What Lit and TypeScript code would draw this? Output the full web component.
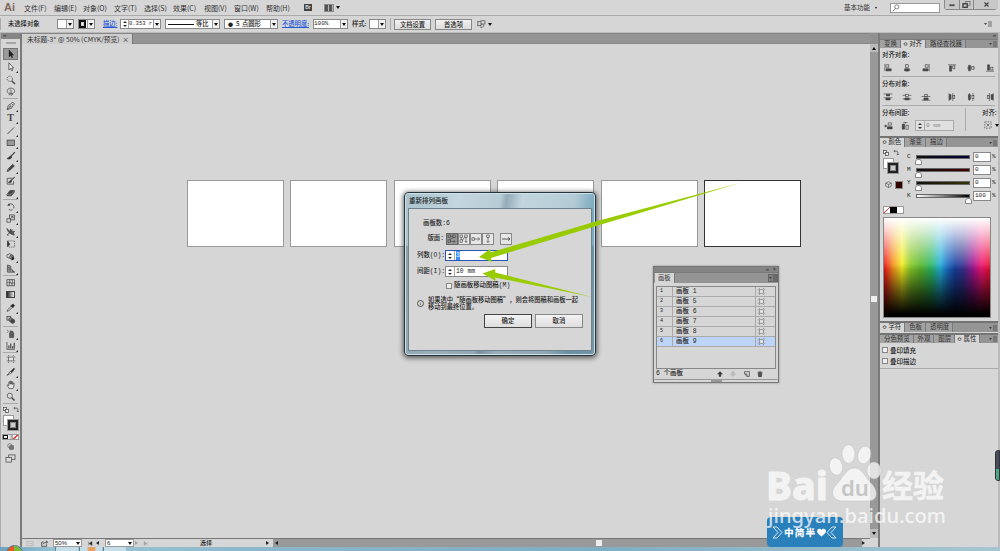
import { LitElement, html, svg, css, TemplateResult } from "lit";
import { customElement, state } from "lit/decorators.js";
import { classMap } from "lit/directives/class-map.js";

const icon = (body: unknown, size = 10, cls = "") =>
  html`<svg class="ic ${cls}" width=${size} height=${size} viewBox="0 0 10 10">${body}</svg>`;

const TOOLS: Record<string, TemplateResult> = {
  select: svg`<path d="M3 .5V9L5 7.2 6.2 9.6 7.4 9 6.3 6.7H8.6Z" fill="#222" stroke="none"/>`,
  direct: svg`<path d="M3 .8V8.4L4.8 6.8 6 9.2 7 8.8 6 6.3H8.2Z" fill="#eee"/>`,
  wand: svg`<circle cx="4" cy="4" r="2.8" stroke-dasharray="1.4 .9"/><path d="M6 6 9.5 9.5" stroke-width="1.4"/>`,
  lasso: svg`<path d="M2.2 6.2C0 4 2 1.2 5 1.2S9.8 3.4 8.8 5.4 4.8 7 3.6 6.4 3 8 4.2 8.8M4 3.3C5 2.5 6 3.6 5.2 6.4L5.4 8.8 7.4 7.2"/>`,
  pen: svg`<path d="M1.2 9 2.4 4.6 5.8 2.6 7.6 4.4 5.8 7.6ZM1.2 9 4.2 6M6 2.2 7 1.1 9 3.2 8 4.2" /><circle cx="4.6" cy="5.6" r=".7"/>`,
  line: svg`<path d="M1.5 8.5 8.5 1.5" stroke-width="1"/>`,
  rect: svg`<rect x="1.2" y="2.2" width="7.6" height="5.8" fill="#999"/>`,
  brush: svg`<path d="M9.3 1.2 5.2 5.6" stroke-width="1.3"/><path d="M5.4 5.2C3.4 5 3.6 7 1 8 3.2 9.2 6 8.2 6 6Z" fill="#333"/>`,
  pencil: svg`<path d="M1.2 9 2 6.6 7 1.4 8.8 3.1 3.6 8.2Z" fill="#444"/><path d="M2.3 6.8 3.4 8" stroke="#ddd"/>`,
  blob: svg`<path d="M6.6 2.4H1.3V8.6H8V5.4"/><path d="M9.2 1.2 5.4 4.6" stroke-width="1.2"/><path d="M5.4 4.2C3.8 4.4 4 6.4 2.4 6.8 4.4 7.6 6 6.8 6 5Z" fill="#333"/>`,
  eraser: svg`<path d="M1 6.8 4.2 2.6H9L8.6 4.6 5.6 8.2H1.2Z" fill="#444"/><path d="M1 6.6H5.6L9 2.8" stroke="#bbb" stroke-width=".5"/>`,
  rotate: svg`<path d="M2.8 2.9A3.3 3.3 0 1 1 3 7.8" stroke-dasharray="9 .8 1 .8"/><path d="M1.2 3.8 4.3 3.9 3.4 1.2Z" fill="#333" stroke="none"/>`,
  scale: svg`<rect x="3.8" y="1" width="5.2" height="5.2"/><rect x="1" y="5" width="3.8" height="3.6" fill="#ddd"/><path d="M4 5.8 7.4 2.6M7.4 4.6V2.6H5.2"/>`,
  width: svg`<path d="M1 1.5C2 5 3 7 8.8 8.5 7.4 6 8 5 9 4.6 6.6 4.8 5.4 4.4 5 2L4 4.8 3.2 4Z" fill="#555"/><path d="M1 8.5 7 3M1 8.5H3"/>`,
  free: svg`<rect x="2.5" y="2" width="6.5" height="6.5" stroke-dasharray="1.2 1"/><path d="M1.2 1.3V8.8L4.4 5.5Z" fill="#333" stroke="none"/>`,
  shape: svg`<ellipse cx="3.8" cy="4.2" rx="3" ry="2.2"/><circle cx="6" cy="5.4" r="2.2" fill="#999"/><path d="M6 4V9L9 7.4Z" fill="#222" stroke="none"/>`,
  persp: svg`<path d="M1.5 1 5 2.2V8.6H1.5ZM3.2 1.6V8.6M1.5 3.5 5 4.2M1.5 6H5M5 4.8 9.2 8.6H5M6.6 6.3V8.6M7.8 7.4V8.6"/>`,
  mesh: svg`<rect x="1" y="1.8" width="8" height="6.4"/><path d="M1.2 5C3 3 6 7 8.8 5M3.6 1.8C5 4 2.6 6 3.8 8.2M6.4 1.8C7.6 4 5.4 6 6.6 8.2"/>`,
  eye: svg`<path d="M1.2 8.8 1.8 7 5.6 3.3 6.8 4.5 3 8.2Z"/><path d="M5 2.8 7.2 5 9 2.6 7.6 1.1Z" fill="#222"/>`,
  blend: svg`<rect x="1" y="1.4" width="4" height="4" fill="#bbb"/><circle cx="5" cy="5" r="2" fill="#888"/><circle cx="7" cy="6.6" r="2.2" fill="#444"/>`,
  spray: svg`<path d="M3.8 4H8V9H3.8ZM4.6 4V2.4H7.2V4M4 2H5M1 1.4H1.8M2.2 2.4H3M1 3.4H1.8" fill="#777"/><path d="M5.2 5.6H7V7.6H5.2Z"/>`,
  graph: svg`<path d="M1 1V8.8H9.4"/><path d="M3 8V4.8M5 8V2.6M7 8V5.4M8.7 8V1.8" stroke-width="1.2"/>`,
  artboard: svg`<rect x="2" y="2.6" width="6" height="4.8" fill="#e4e4e4"/><path d="M2 0V1.6M8 0V1.6M2 8.4V10M8 8.4V10M-.4 2.6H1M-.4 7.4H1M9 2.6H10.4M9 7.4H10.4"/>`,
  knife: svg`<path d="M1 8.8 4.6 4.6 6 6Z" fill="#eee"/><path d="M4.8 4.5 8.4 1.2 9 2 6.2 5.9Z" fill="#333"/>`,
  hand: svg`<path d="M3.4 9 1 5.6 1.8 5 3 6V2.2L4 1.9 4.4 4.4V1.2H5.5V4.4L6 1.8 7 2V4.8L7.6 3.2 8.6 3.5 8 7.4 7.2 9Z" fill="#e8e8e8"/>`,
  zoom: svg`<circle cx="4" cy="4" r="2.7" fill="#ddd"/><path d="M6 6 9 9" stroke-width="1.5"/>`,
};
const GROUPS: string[][] = [
  ["select", "direct", "wand", "lasso"],
  ["pen", "type", "line", "rect", "brush", "pencil", "blob", "eraser"],
  ["rotate", "scale", "width", "free", "shape", "persp"],
  ["mesh", "grad", "eye", "blend"],
  ["spray", "graph"],
  ["artboard", "knife", "hand", "zoom"],
];
const NO_FLYOUT = ["select", "wand", "lasso", "blob", "free", "mesh", "grad", "blend", "artboard", "zoom"];
const MENUS = ["文件(F)", "编辑(E)", "对象(O)", "文字(T)", "选择(S)", "效果(C)", "视图(V)", "窗口(W)", "帮助(H)"];

const swap = svg`<path d="M2 2H6.4C7.4 2 8 2.6 8 3.6V8M6.4 6.6 8 8.4 9.6 6.6M3.4 .4 1.4 2 3.4 3.6" stroke-width="1.2"/>`;
const defaults = svg`<rect x="1" y="1" width="5" height="5" fill="#eee" stroke-width="1.2"/><rect x="4" y="4" width="5" height="5" fill="#eee" stroke-width="1.2"/>`;
const panelMenu = html`<svg class="pm" width="8" height="6" viewBox="0 0 8 6"><path d="M0 2H3L1.5 4Z" fill="#444"/><path d="M4 1H8M4 3H8M4 5H8" stroke="#444" stroke-width=".7"/></svg>`;

/* Align-panel glyphs: guide line plus a dark and a light block. */
const ALIGN = [
  svg`<path d="M1 0V9"/><rect x="2.5" y="1" width="3.5" height="3"/><path d="M2.5 6H9V8.6H2.5Z" fill="#444"/>`,
  svg`<path d="M5 0V10"/><rect x="3.3" y="1" width="3.4" height="3" fill="#ddd"/><path d="M2 6H8V8.6H2Z" fill="#444"/>`,
  svg`<path d="M9 0V9"/><rect x="4" y="1" width="3.6" height="3"/><path d="M1.2 6H7.6V8.6H1.2Z" fill="#444"/>`,
  svg`<path d="M0 1H10"/><path d="M2 2.4H4.4V9H2Z" fill="#444"/><rect x="6" y="2.4" width="2.6" height="3.6"/>`,
  svg`<path d="M0 5H10"/><path d="M2 1.6H4.2V8.4H2Z" fill="#444"/><rect x="6" y="3.2" width="2.6" height="3.6" fill="#ddd"/>`,
  svg`<path d="M0 9H10"/><path d="M2 1H4.4V7.6H2Z" fill="#444"/><rect x="6" y="4" width="2.6" height="3.6"/>`,
];
const DIST = [
  svg`<path d="M-.5 1.2H10.5M-.5 6H10.5"/><path d="M3 1.6H7V3.6H3ZM2.4 6.4H7.6V8.6H2.4Z" fill="#444"/>`,
  svg`<path d="M-.5 3H10.5M-.5 7.4H10.5"/><rect x="3" y="1.6" width="4" height="2.6" fill="#ddd"/><path d="M2.4 6.2H7.6V8.6H2.4Z" fill="#444"/>`,
  svg`<path d="M-.5 4.4H10.5M-.5 9H10.5"/><rect x="3.4" y="1.6" width="3.2" height="2.6"/><path d="M2.4 6.2H7.6V8.6H2.4Z" fill="#444"/>`,
  svg`<path d="M1.4 0V10M6 0V10"/><path d="M1.6 2H3.8V8H1.6Z" fill="#444"/><rect x="6" y="3" width="2.4" height="4"/>`,
  svg`<path d="M3 0V10M7.4 0V10"/><path d="M1.8 2H4.2V8H1.8Z" fill="#444"/><rect x="6.2" y="3" width="2.4" height="4" fill="#ddd"/>`,
  svg`<path d="M4.2 0V10M9 0V10"/><rect x="1.6" y="3" width="2.4" height="4"/><path d="M6.4 2H8.8V8H6.4Z" fill="#444"/>`,
];
const SPACING = [
  svg`<path d="M4 1H8V4H4ZM0 5H3"/><path d="M3 6H9V8.6H3ZM0 3.6V6.4L2 5Z" fill="#444"/>`,
  svg`<path d="M1.6 2.6H4.4V9H1.6Z" fill="#444"/><rect x="6.2" y="4" width="2.8" height="5"/><path d="M3 .6H8M5.5 0V2"/>`,
];

@customElement("app-root")
export class AppRoot extends LitElement {
  @state() private boards = ["1", "5", "6", "7", "8", "9"];
  @state() private selected = 5;

  static styles = css`
    :host { display: block; width: 1000px; height: 551px; overflow: hidden; position: relative;
      background: #d6d6d6; color: #222; font: 500 6.4px/8px "Noto Sans CJK SC", sans-serif; white-space: nowrap; }
    * { box-sizing: border-box; }
    .ic { display: block; flex: none; fill: none; stroke: #444; stroke-width: .8; overflow: visible; }
    .mono { font-family: "Liberation Mono", "Noto Sans CJK SC", monospace; }
    .row { display: flex; align-items: center; }
    .dn { display: block; width: 0; height: 0; border: 2px solid transparent; border-top: 3px solid #111; border-bottom: 0; margin: auto; }
    .dn.near { margin: 0 0 0 3px; }

    .app { display: grid; grid-template-rows: 16px 17px 514px 4px; height: 551px; }
    .menu { display: grid; grid-template-columns: 4px 20px 30px 29px 31px 30px 29px 31px 30px 32px 38px 20px 520px 46px 55px 49px;
      align-items: center; font-size: 7px; font-weight: 400; color: #333; border-bottom: 1px solid #aaa; }
    .ai { font: bold 11px/15px "Liberation Sans", sans-serif; color: #80675a; }
    .br { width: 8px; height: 7px; background: #444; color: #ddd; font: bold 5px/7px "Liberation Sans", sans-serif; text-align: center; }
    .lay { display: flex; gap: 2px; }
    .lay i:first-child { width: 10px; height: 8px; border: 1px solid #888; background: repeating-linear-gradient(90deg, #555 0 3px, #bbb 3px 4px); }
    .lay .dn { margin: 2px 0 0; }
    .ws { font-size: 6.5px; display: flex; gap: 5px; padding-bottom: 2px; }
    .ws .dn { margin: 4px 0 0; border-width: 1.5px; border-top-width: 2px; }
    .search { width: 50px; height: 10px; border: 1px solid #999; background: #fff; padding-left: 1px; }
    .win { display: grid; grid-template-columns: 15px 14px 24px; width: 53px; height: 10px; margin: -6px 0 0 -1px; border: 1px solid #888; border-top: 0; border-radius: 0 0 3px 3px; }
    .win span { display: grid; place-items: center; border-right: 1px solid #888; background: #c8c8c8; }
    .win span:last-child { border: 0; }

    .ctl { display: grid; align-items: center; border-bottom: 1px solid #bbb; font-size: 6.3px;
      grid-template-columns: 3px 5px 49px 21px 25px 17px 45px 59px 58px 31px 39px 17px 21px 4px 41px 42px 507px 16px; }
    .grip { width: 1px; height: 12px; background: #aaa; }
    .sw { display: grid; grid-template-columns: 1fr 7px; width: 17px; height: 10px; border: 1px solid #888; background: #fff; align-items: center; }
    .sw > .a { border-left: 1px solid #999; height: 8px; display: grid; background: #f2f2f2; }
    .sw > .k { background: #fff; border: 2px solid #111; height: 8px; box-shadow: inset 0 0 0 1px #ccc; margin-right: 1px; }
    .num, .cap, .dot { width: 41px; grid-template-columns: 8px 1fr 7px; }
    .num { font-size: 5.5px; }
    .cap { width: 55px; grid-template-columns: 1fr 16px 7px; }
    .dot { width: 54px; grid-template-columns: 11px 1fr 7px; word-spacing: 1px; }
    .dot b { text-align: center; font-size: 5px; }
    .pct { width: 35px; font-size: 6px; }
    .sp { display: grid; align-content: center; gap: 2px; height: 100%; border-right: 1px solid #aaa; }
    .sp i { width: 0; height: 0; margin: auto; border: 2px solid transparent; border-top: 2.5px solid #333; border-bottom: 0; }
    .sp i:first-child { border-top: 0; border-bottom: 2.5px solid #333; }
    .cap .ln { height: 1px; background: #111; margin: 0 2px; }
    .lnk { color: #2459d8; text-decoration: underline; }
    .btn { width: 37px; height: 11px; line-height: 9px; border: 1px solid #888; text-align: center; background: linear-gradient(#f2f2f2, #dcdcdc); }

    .main { display: grid; grid-template-columns: 20px 2px 848px 8px 2px 120px; min-height: 0; }
    .split { background: #7b7b7b; }
    .tools { background: #d6d6d6; border-left: 1px solid #aaa; display: flex; flex-direction: column; align-items: center; }
    .tools .hd { width: 100%; height: 6px; background: #868686; color: #333; font: 6px/5px "Liberation Sans"; padding-left: 2px; flex: none; }
    .gr { width: 10px; height: 2px; background: #a5a5a5; margin: 3px 0 4.2px; flex: none; }
    .tool { width: 15px; height: 12.5px; flex: none; display: grid; place-items: center; position: relative; }
    .tool.on { background: #9a9a9a; border: 1px solid #777; height: 11.5px; margin-bottom: 1px; }
    .tool.fly::after { content: ""; position: absolute; right: 0; bottom: 0; border: 1px solid #222; border-top-color: transparent; border-left-color: transparent; }
    .tt { font: bold 10px/12px "Liberation Serif", serif; color: #444; }
    .gd { width: 9px; height: 7px; border: 1px solid #444; background: linear-gradient(90deg, #222, #eee); }
    .tsep { width: 15px; height: 1px; background: #aaa; flex: none; }
    .mini { display: flex; gap: 4px; height: 11px; align-items: center; flex: none; }
    .fs { position: relative; width: 16px; height: 16px; flex: none; }
    .fs i { position: absolute; width: 11px; height: 11px; left: 0; top: 0; background: #fff; border: 1px solid #999; }
    .fs i + i { left: 5px; top: 5px; background: #ccc; border: 2px solid #222; outline: 1px solid #999; box-shadow: inset 0 0 0 1px #888; width: 10px; height: 10px; }
    .modes { display: flex; margin: 3px 0 3px; border: 1px solid #999; flex: none; }
    .modes i { width: 5px; height: 4px; background: #eee; border: 1px solid #111; }
    .modes i:nth-child(2) { background: linear-gradient(90deg, #fff, #999); border: 0; }
    .modes i:nth-child(3) { background: linear-gradient(135deg, #fff 40%, #e33 40% 60%, #fff 60%); border: 0; }
    .more { display: grid; gap: 4px; justify-items: center; }

    .doc { display: grid; grid-template-rows: 11px 494px 9px; }
    .tabbar { background: #949494; border-bottom: 1px solid #888; border-top: 1px solid #858585; }
    .tab { display: flex; justify-content: space-between; width: 111px; height: 10px; line-height: 10px; padding: 0 3px 0 5px; background: #cfcfcf; border-right: 1px solid #777; font-size: 6.75px; font-weight: 400; color: #333; }
    .canvas { background: #d6d6d6; padding: 136px 0 0 165px; display: flex; gap: 6.4px; align-items: flex-start; }
    .ab { width: 97px; height: 67px; background: #fff; border: 1px solid #999; flex: none; }
    .ab:last-child { border-color: #333; }
    .status { display: grid; grid-template-columns: 5px 14px 12px 35px 8px 9px 30px 8px 12px 45px 66px 7px 322px 8px 259px 8px; align-items: center; font-size: 6px; border-top: 1px solid #777; }
    .status .cmb { display: grid; grid-template-columns: 1fr 7px; background: #fff; border: 1px solid #999; height: 8px; line-height: 6px; width: 29px; padding-left: 1px; font-family: "Liberation Sans", sans-serif; }
    .status .cmb .dn { margin: 1.5px auto 0; }
    .hs { background: #999; height: 8px; }
    .th { background: #eee; height: 8px; border: 1px solid #999; }
    .l, .r { width: 0; height: 0; border: 2.5px solid transparent; border-left: 0; border-right: 3.5px solid #222; }
    .hs .l { margin-left: 2px; }
    .r { border-left: 3.5px solid #222; border-right: 0; }
    .pale { opacity: .3; }
    .vs { background: #999; border-top: 11px solid #909090; display: grid; grid-template-rows: 8px 243px 8px 1fr 9px 9px; }
    .vs .cell, .vs .corner { background: #bbb; display: grid; place-items: center; }
    .vs .corner { background: #d6d6d6; }
    .up { width: 0; height: 0; border: 2.5px solid transparent; border-top: 0; border-bottom: 3.5px solid #111; }

    .side { background: #d6d6d6; border-right: 2px solid #bbb; display: grid; grid-template-columns: 118px; grid-template-rows: 6px 9px 88px 11px 174px 11px 1px 10px 26px 1fr; min-height: 0; }
    .top { background: #8a8a8a; text-align: right; padding-right: 2px; color: #333; font: 6px/5px "Liberation Sans"; }
    .tabs { background: #959595; display: flex; align-items: flex-end; border-top: 1px solid #7a7a7a; font-size: 6.4px; font-weight: 400; }
    .tabs.thick { border-top-width: 2px; border-top-color: #747474; }
    .tabs span { align-self: stretch; padding: 0 3px 0 4px; color: #333; border-right: 1px solid #7a7a7a; background: #a2a2a2; line-height: 8px; }
    .tabs span.on { background: #d6d6d6; padding-left: 2px; color: #222; }
    .pm { flex: none; }
    .tabs .pm { margin: auto 1px 1px auto; }
    .al { padding: 2px 3px 0 2px; display: flex; flex-direction: column; }
    .al .lb { height: 10px; line-height: 10px; }
    .ics { display: grid; grid-template-columns: 19px 19px 26px 19px 19px 9px; padding-left: 2px; height: 16px; align-items: center; }
    .hr { height: 1px; background: #aaa; margin-bottom: 2px; }
    .last { display: grid; grid-template-columns: 83px 1fr; }
    .last > div:last-child { border-left: 1px solid #aaa; padding-left: 16px; }
    .last .row { padding: 3px 0 0 2px; }
    .gap { display: flex; align-items: center; gap: 8px; padding: 2px 0 0 3px; }
    .gf { width: 39px; height: 11px; background: #e0e0e0; border: 1px solid #aaa; color: #888; display: grid; grid-template-columns: 9px 1fr; line-height: 9px; font-size: 6px; margin-left: -2px; }
    .gf > :last-child { padding-left: 1px; }
    .color { display: grid; grid-template-columns: 108px; grid-template-rows: 67px 1fr; padding: 3px 7px 3px 3px; }
    .cgrid { display: grid; grid-template-columns: 24px 84px; }
    .cleft { display: flex; flex-direction: column; gap: 2px; }
    .cleft .row { gap: 4px; }
    .cube { display: flex; gap: 3px; padding: 5px 0 0 2px; }
    .cube i { width: 8px; height: 8px; background: #300; border: 1px solid #888; }
    .none { display: flex; margin-top: 15px; border: 1px solid #999; width: 21px; height: 8px; }
    .none i { flex: 1; background: linear-gradient(135deg, #fff 42%, #e33 42% 58%, #fff 58%); }
    .none i + i { background: #000; } .none i + i + i { background: #fff; }
    .sl { display: grid; grid-template-columns: 9px 54px 3px 18px 5px; height: 13.1px; align-items: center; font-size: 6px; }
    .sl > :last-child { padding-left: 1px; }
    .trk { height: 4px; border: .5px solid #666; position: relative; }
    .trk::after { content: ""; position: absolute; left: -2.5px; top: 3px; width: 5px; height: 4px; background: #fff; border: 1px solid #888; border-radius: 3px 3px 0 0; }
    .trk.end::after { left: auto; right: -2.5px; }
    .c { background: linear-gradient(90deg, #111, #003); } .m { background: linear-gradient(90deg, #111, #400); }
    .y { background: linear-gradient(90deg, #111, #330); } .k4 { background: linear-gradient(90deg, #fff, #000); }
    .fd { height: 10px; border: 1px solid #888; background: #fff; padding-left: 1px; line-height: 8px; }
    .spec { width: 108px; border: 1px solid #888;
      background: linear-gradient(#fff 0, #fffb 15%, #fff0 52%), linear-gradient(#0000 46%, #0009 75%, #000 97%),
      linear-gradient(90deg, #f0101c 0, #f58a1c 8%, #f3ef20 17%, #8bc92a 25%, #5db82c 34%, #2eb860 44%, #20b0d8 53%, #1a6cc4 60%, #1740a0 67%, #3a2f92 75%, #a01490 84%, #f01470 92%, #e81030 100%); }
    .attr { padding: 3px 2px; display: grid; gap: 2px; border-bottom: 1px solid #aaa; font-size: 6.5px; }
    .ck { width: 6px; height: 6px; border: 1px solid #888; background: #eee; margin-right: 2px; }

    .task { background: linear-gradient(90deg, #6da3bd, #9cc3d2 6%, #8ab5c8 30%, #7faec2 60%, #a7c6d1); display: flex; padding-left: 55px; }
    .task i { width: 23px; margin-right: 1px; border-left: 1px solid #5c8497; background: #c4dde6; }
    .task i:nth-child(2) { background: linear-gradient(90deg, #c4dde6 30%, #e8a05c 40% 65%, #c4dde6 75%); }
    .orb { position: absolute; left: 6px; top: 545px; width: 17px; height: 17px; border-radius: 50%; border: 1px solid #4a7c94; background: conic-gradient(#7db936 90deg, #2d7fd0 90deg 180deg, #f4c020 180deg 270deg, #e4582a 270deg); }

    .pal { position: absolute; left: 653px; top: 266px; width: 126px; height: 117px; border: 1px solid #777; background: #d6d6d6; box-shadow: 0 0 2px #888; display: grid; grid-template-rows: 5px 11px 3px 83px 10px 3px; }
    .pal .top { background: #858585; }
    .pal .tabs span { background: #d6d6d6; line-height: 10px; padding: 0 3px; margin-left: 1px; font-size: 6.3px; }
    .pal .tabs .pm { margin: auto 1px auto auto; background: #808080; outline: 1px solid #666; }
    .list { margin: 0 2px; border: 1px solid #888; }
    .pr { display: grid; grid-template-columns: 16px 83px 1fr; height: 10px; line-height: 9px; border-bottom: 1px solid #aaa; font-size: 6.4px; }
    .pr.on { background: #bdd4f6; }
    .pr > * { border-right: 1px solid #aaa; padding-left: 3px; }
    .pr > :last-child { border: 0; display: flex; align-items: center; padding-left: 2px; }
    .pr .n { font-size: 5px; }
    .pr .ic { stroke: #666; }
    .ft { display: grid; grid-template-columns: 61px 13px 14px 13px 1fr; padding-left: 2px; align-items: center; }
    .bt { border-top: 1px solid #999; display: grid; place-items: center; }
    .bt i { width: 11px; height: 2px; background: #999; }

    .dlg { position: absolute; left: 404px; top: 192px; width: 192px; height: 164px; border: 1px solid #27333a; border-radius: 4px; padding: 0 3px 4px;
      box-shadow: 0 1px 5px 1px #0009, inset 0 0 0 1px #cfe2ea; display: grid; grid-template-rows: 15px 1fr;
      background: linear-gradient(#fff0 0, #fff0 32%, #4a5f6a55 33%, #4a5f6a55), linear-gradient(100deg, #a8c2ce, #c4d6de 25%, #b8ccd5 44%, #93acb8 47%, #c2d5de 54%, #b4cbd6 78%, #78a8be 88%, #8fb4c4); }
    .dlg .title { padding: 2px 0 0 1px; font-size: 6.5px; line-height: 11px; }
    .dbody { background: #d6d6d6; border: 1px solid #6d838f; padding: 8px 8px 0 8px; display: grid; grid-template-rows: 13px 17.5px 16.5px 15px 13px 22px 14px; align-items: center; }
    .indent { padding-left: 6px; } .indent2 { padding-left: 29px; }
    .f { display: grid; grid-template-columns: 28px 63px; align-items: center; }
    .f > :first-child { text-align: right; padding-right: 1px; }
    .f.w { grid-template-columns: 28px 1fr; }
    .seg { display: flex; margin-left: 1px; }
    .seg span { width: 12.3px; height: 12px; border: 1px solid #888; margin-right: -.4px; display: grid; place-items: center; background: #e6e6e6; }
    .seg .on { background: #969696; border-color: #666; }
    .seg span:last-child { margin-left: 6px; }
    .in { display: grid; grid-template-columns: 9px 1fr; height: 11px; background: #fff; border: 1px solid #888; line-height: 9px; font-size: 6.4px; }
    .in.foc { border-color: #2c55b4; }
    .in > span:last-child { padding-left: 1px; }
    .in mark { background: #3390ff; color: #fff; padding: 1px 0; }
    .note { display: grid; grid-template-columns: 11px 1fr; align-items: center; line-height: 7.4px; font-size: 6.25px; }
    .info { width: 7px; height: 7px; border: 1px solid #555; border-radius: 50%; font: 5px/5px "Liberation Serif"; text-align: center; }
    .acts { display: flex; gap: 3px; justify-content: flex-end; align-self: end; }
    .acts span { width: 48px; height: 14px; line-height: 12px; text-align: center; border: 1px solid #888; background: linear-gradient(#f3f3f3, #dedede); }
    .acts span:first-child { border-color: #444; }

    .over { position: absolute; left: 0; top: 0; }
    .badge { position: absolute; left: 767px; top: 517px; width: 76px; height: 30px; border-radius: 4px; background: #2a80bb; }
    .edge { position: absolute; right: 0; top: 450px; width: 5px; height: 31px; border-radius: 3px 0 0 3px; border: 1px solid #333; background: linear-gradient(#464b5c 62%, #4ba687 62%); }
  `;

  private swatch(k: boolean) {
    return html`<div class="sw"><i class=${k ? "k" : ""}></i><span class="a"><i class="dn"></i></span></div>`;
  }
  private arrow() { return html`<span class="a"><i class="dn"></i></span>`; }
  private spin() { return html`<span class="sp"><i></i><i></i></span>`; }

  private tool(name: string) {
    const body = name === "type" ? html`<span class="tt">T</span>`
      : name === "grad" ? html`<span class="gd"></span>` : icon(TOOLS[name], name === "artboard" ? 8 : 9.5);
    return html`<div class=${classMap({ tool: true, on: name === "select", fly: !NO_FLYOUT.includes(name) })}>${body}</div>`;
  }

  private renderMenu() {
    return html`<div class="menu"><i></i><span class="ai">Ai</span>${MENUS.map((m) => html`<span>${m}</span>`)}
      <span class="br">Br</span><span class="lay"><i></i><i class="dn"></i></span>
      <span class="ws">基本功能 <i class="dn"></i></span>
      <span class="search">${icon(svg`<circle cx="6" cy="3.6" r="2.6"/><path d="M4 5.6 1 9"/>`, 8)}</span>
      <span class="win"><span>${icon(svg`<path d="M1 6H9V8H1Z" fill="#444"/>`, 6)}</span>
      <span>${icon(svg`<rect x="4" y="1" width="6" height="5"/><rect x="0" y="4" width="6" height="5" fill="#ccc" stroke-width="2"/>`, 7)}</span>
      <span>${icon(svg`<path d="M1 1 9 9M9 1 1 9" stroke-width="2.4"/>`, 5)}</span></span></div>`;
  }

  private renderControl() {
    return html`<div class="ctl"><i class="grip"></i><i></i><span>未选择对象</span>
      ${this.swatch(false)}${this.swatch(true)}<span class="lnk">描边:</span>
      <div class="sw num mono">${this.spin()}<span>0.353 r</span>${this.arrow()}</div>
      <div class="sw cap"><i class="ln"></i><span>等比</span>${this.arrow()}</div>
      <div class="sw dot"><b>●</b><span>5 点圆形</span>${this.arrow()}</div>
      <span class="lnk">不透明度:</span>
      <div class="sw pct mono"><span>100%</span>${this.arrow()}</div>
      <span>样式:</span>${this.swatch(false)}<i class="grip"></i>
      <span class="btn">文档设置</span><span class="btn">首选项</span>
      <span class="row">${icon(svg`<path d="M0 2H5M0 7H5M1 2V7"/><rect x="5" y="1" width="5" height="4"/><path d="M5 5V10L9 7Z" fill="#eee"/>`, 8)}<i class="dn near"></i></span>
      ${panelMenu}</div>`;
  }

  private renderTools() {
    return html`<div class="tools"><div class="hd">»</div><div class="gr"></div>
      ${GROUPS.map((g) => html`${g.map((n) => this.tool(n))}<div class="tsep"></div>`)}
      <div class="mini">${icon(defaults, 6)}${icon(swap, 6)}</div>
      <div class="fs"><i></i><i></i></div>
      <div class="modes"><i></i><i></i><i></i></div>
      <div class="more">${icon(svg`<circle cx="4" cy="4" r="3"/><rect x="4" y="4" width="5" height="5" fill="#777"/>`, 7)}
      ${icon(svg`<rect x="3" y="1" width="7" height="5"/><rect x="0" y="4" width="6" height="5" fill="#ddd"/>`, 9)}</div></div>`;
  }

  private renderDoc() {
    return html`<div class="doc"><div class="tabbar"><div class="tab"><span>未标题-3* @ 50% (CMYK/预览)</span><span>×</span></div></div>
      <div class="canvas">${this.boards.map(() => html`<div class="ab"></div>`)}</div>
      <div class="status"><i></i>${icon(svg`<path d="M0 2H9V8H0ZM2 5H7"/>`, 7, "pale")}${icon(svg`<path d="M4 3H1V9H8V6M3 6C4 4 6 3 9 3M7 1 9.5 3 7 5" stroke-width="1.2"/>`, 7)}
      <span class="cmb"><span>50%</span><i class="dn"></i></span>
      ${icon(svg`<path d="M1 1V9"/><path d="M8 1V9L2 5Z" fill="#222"/>`, 5)}<i class="l"></i>
      <span class="cmb"><span>6</span><i class="dn"></i></span><i class="r pale"></i>
      ${icon(svg`<path d="M9 1V9"/><path d="M2 1V9L8 5Z" fill="#222"/>`, 5, "pale")}<i></i>
      <span>选择</span><i class="r"></i>
      <span class="hs row"><i class="l"></i></span><i class="th"></i><span class="hs"></span><i class="r"></i></div></div>`;
  }

  private renderSide() {
    const sliders = [["C", "c", "0"], ["M", "m", "0"], ["Y", "y", "0"], ["K", "k4 end", "100"]];
    return html`<div class="side"><div class="top">»</div>
      <div class="tabs"><span>变换</span><span class="on">≎ 对齐</span><span>路径查找器</span>${panelMenu}</div>
      <div class="al"><div class="lb">对齐对象:</div><div class="ics">${ALIGN.map((a) => icon(a, 8))}</div><div class="hr"></div>
        <div class="lb">分布对象:</div><div class="ics">${DIST.map((a) => icon(a, 8))}</div><div class="hr"></div>
        <div class="last"><div><div class="lb">分布间距:</div><div class="gap">${SPACING.map((a) => icon(a, 8))}
          <span class="gf mono">${this.spin()}<span>0 mm</span></span></div></div>
        <div><div class="lb">对齐:</div><div class="row">${icon(svg`<rect x="1" y="1" width="8" height="8" stroke-dasharray="2 1.4"/><path d="M3 3 7 7M7 3 3 7"/>`, 8)}<i class="dn near"></i></div></div></div></div>
      <div class="tabs thick"><span class="on">≎ 颜色</span><span>渐变</span><span>描边</span>${panelMenu}</div>
      <div class="color"><div class="cgrid"><div class="cleft"><div class="row">${icon(defaults, 6)}${icon(swap, 6)}</div>
        <div class="fs"><i></i><i></i></div>
        <div class="cube">${icon(svg`<path d="M5 1 9 3V7.4L5 9.4 1 7.4V3ZM1 3 5 5 9 3M5 5V9.4"/>`, 7)}<i></i></div>
        <div class="none"><i></i><i></i><i></i></div></div>
        <div>${sliders.map(([n, c, v]) => html`<div class="sl mono"><span>${n}</span><span class="trk ${c}"></span><i></i><span class="fd">${v}</span><span>%</span></div>`)}</div></div>
        <div class="spec"></div></div>
      <div class="tabs thick"><span class="on">≎ 字符</span><span>色板</span><span>透明度</span>${panelMenu}</div><i></i>
      <div class="tabs thick"><span>分色预览</span><span>外观</span><span>图层</span><span class="on">≎ 属性</span>${panelMenu}</div>
      <div class="attr"><div class="row"><i class="ck"></i>叠印填充</div><div class="row"><i class="ck"></i>叠印描边</div></div></div>`;
  }

  private renderPalette() {
    return html`<div class="pal"><div class="top">«&nbsp; ×</div><div class="tabs"><span>画板</span>${panelMenu}</div><i></i>
      <div class="list">${this.boards.map((b, i) => html`<div class=${classMap({ pr: true, on: i === this.selected })}>
        <span class="n mono">${i + 1}</span><span class="mono">画板 ${b}</span><span>${icon(TOOLS.artboard, 7)}</span></div>`)}</div>
      <div class="ft"><span class="mono">6 个画板</span>
        ${icon(svg`<path d="M5 1 9 5H6.5V9H3.5V5H1Z" fill="#333"/>`, 6)}${icon(svg`<path d="M5 9 9 5H6.5V1H3.5V5H1Z" fill="#888"/>`, 6, "pale")}
        ${icon(svg`<path d="M1 1H9V9H5L1 5ZM1 5H5V9" stroke-width="1.2"/>`, 6)}${icon(svg`<path d="M2 3H8L7.4 9.4H2.6ZM1 2H9M4 1H6" fill="#555" stroke-width="1.2"/>`, 6)}</div>
      <div class="bt"><i></i></div></div>`;
  }

  private renderDialog() {
    const seg = [
      svg`<rect x="0" y="0" width="3" height="3"/><rect x="6" y="0" width="3" height="3"/><rect x="0" y="6" width="3" height="3"/><path d="M3 1.5H6M7 3 2 6M3 8H9M7 6.5 9 8 7 9.5"/>`,
      svg`<rect x="0" y="0" width="3" height="3"/><rect x="6" y="0" width="3" height="3"/><rect x="0" y="6" width="3" height="3"/><path d="M1.5 3V6M3 7 6 2M7.5 3V9M6 7.5 7.5 9.4 9 7.5"/>`,
      svg`<rect x="0" y="3.5" width="3" height="3"/><path d="M3 5H9.5M7.5 3 9.5 5 7.5 7"/>`,
      svg`<rect x="3.5" y="0" width="3" height="3"/><path d="M5 3V9.5M3 7.5 5 9.5 7 7.5"/>`,
      svg`<path d="M0 5H10M7.6 3 10 5 7.6 7" stroke-width="1.1"/>`,
    ];
    return html`<div class="dlg"><div class="title">重新排列画板</div><div class="dbody">
      <div class="mono indent">画板数:6</div>
      <div class="f w mono"><span>版面:</span><div class="seg">${seg.map((s, i) => html`<span class=${i ? "" : "on"}>${icon(s, 8)}</span>`)}</div></div>
      <div class="f mono"><span>列数(O):</span><div class="in foc">${this.spin()}<span><mark>3</mark></span></div></div>
      <div class="f mono"><span>间距(I):</span><div class="in">${this.spin()}<span>10 mm</span></div></div>
      <div class="row mono indent2"><i class="ck"></i>随画板移动图稿(M)</div>
      <div class="note"><span class="info">i</span><span>如果选中“随画板移动图稿”，则会将图稿和画板一起<br>移动到最终位置。</span></div>
      <div class="acts"><span>确定</span><span>取消</span></div></div></div>`;
  }

  private renderOverlay() {
    return html`<div class="badge"></div><div class="edge"></div>
      <svg class="over" width="1000" height="551" viewBox="0 0 1000 551">
        <path d="M740 183 602 224.2 491 258 492 262 479 257 490 249 490.8 252.3 600 220.3Z" fill="#9c0"/>
        <path d="M592 297 495 277.5 496 281 482.5 273.5 495 269 495.3 272.5Z" fill="#9c0"/>
        <path d="M773 527 777 527 782 532.5 777 538 773 538 778 532.5ZM836 527 832 527 827 532.5 832 538 836 538 831 532.5Z" fill="none" stroke="#fff" stroke-width=".8"/>
        <text x="784" y="535.5" font-family="Noto Sans CJK SC" font-weight="900" font-size="9.6" fill="#fff" textLength="31">中简半</text>
        <path d="M821.5 536.5C817 533 816.5 531.5 817.5 529.8 818.8 528 821 528.6 821.5 530 822 528.6 824.2 528 825.5 529.8 826.5 531.5 826 533 821.5 536.5Z" fill="#fff"/>
        <g opacity=".72" fill="#fff" stroke="#bbb" stroke-width=".5">
          <text x="766" y="499.5" font-family="Noto Sans" font-weight="800" font-size="40" textLength="62" lengthAdjust="spacingAndGlyphs" stroke="#fff" stroke-width=".8">Bai</text>
          <ellipse cx="836" cy="466.5" rx="6.6" ry="8.8" transform="rotate(-12 836 466.5)"/>
          <ellipse cx="848.5" cy="454" rx="6.5" ry="9.3"/>
          <ellipse cx="864.3" cy="455" rx="6.5" ry="9" transform="rotate(15 864.3 455)"/>
          <ellipse cx="874" cy="470.5" rx="7" ry="8.5"/>
          <path d="M855 468C862 468 865 477 871 483 879 491 878 501 868 501 862 501 848 501 843 501 832 501 830 491 836 485 843 478 846 468 855 468Z"/>
          <text x="882" y="497" font-family="Noto Sans CJK SC" font-weight="700" font-size="31" textLength="62" stroke="#fff">经验</text>
          <text x="768" y="523" font-family="Noto Sans" font-size="20" textLength="178" lengthAdjust="spacingAndGlyphs" stroke="none">jingyan.baidu.com</text>
        </g>
        <text x="841" y="495.5" font-family="Noto Sans" font-weight="600" font-size="21" fill="#c6c6c6" textLength="28" lengthAdjust="spacingAndGlyphs">du</text>
      </svg>`;
  }

  render() {
    return html`<div class="app">${this.renderMenu()}${this.renderControl()}
      <div class="main">${this.renderTools()}<div class="split"></div>${this.renderDoc()}
        <div class="vs"><span class="cell"><i class="up"></i></span><i></i><i class="th"></i><i></i><span class="cell"><i class="dn"></i></span><i class="corner"></i></div>
        <div class="split"></div>${this.renderSide()}</div>
      <div class="task"><i></i><i></i><i></i></div></div>
      <div class="orb"></div>
      ${this.renderPalette()}${this.renderDialog()}${this.renderOverlay()}`;
  }
}
